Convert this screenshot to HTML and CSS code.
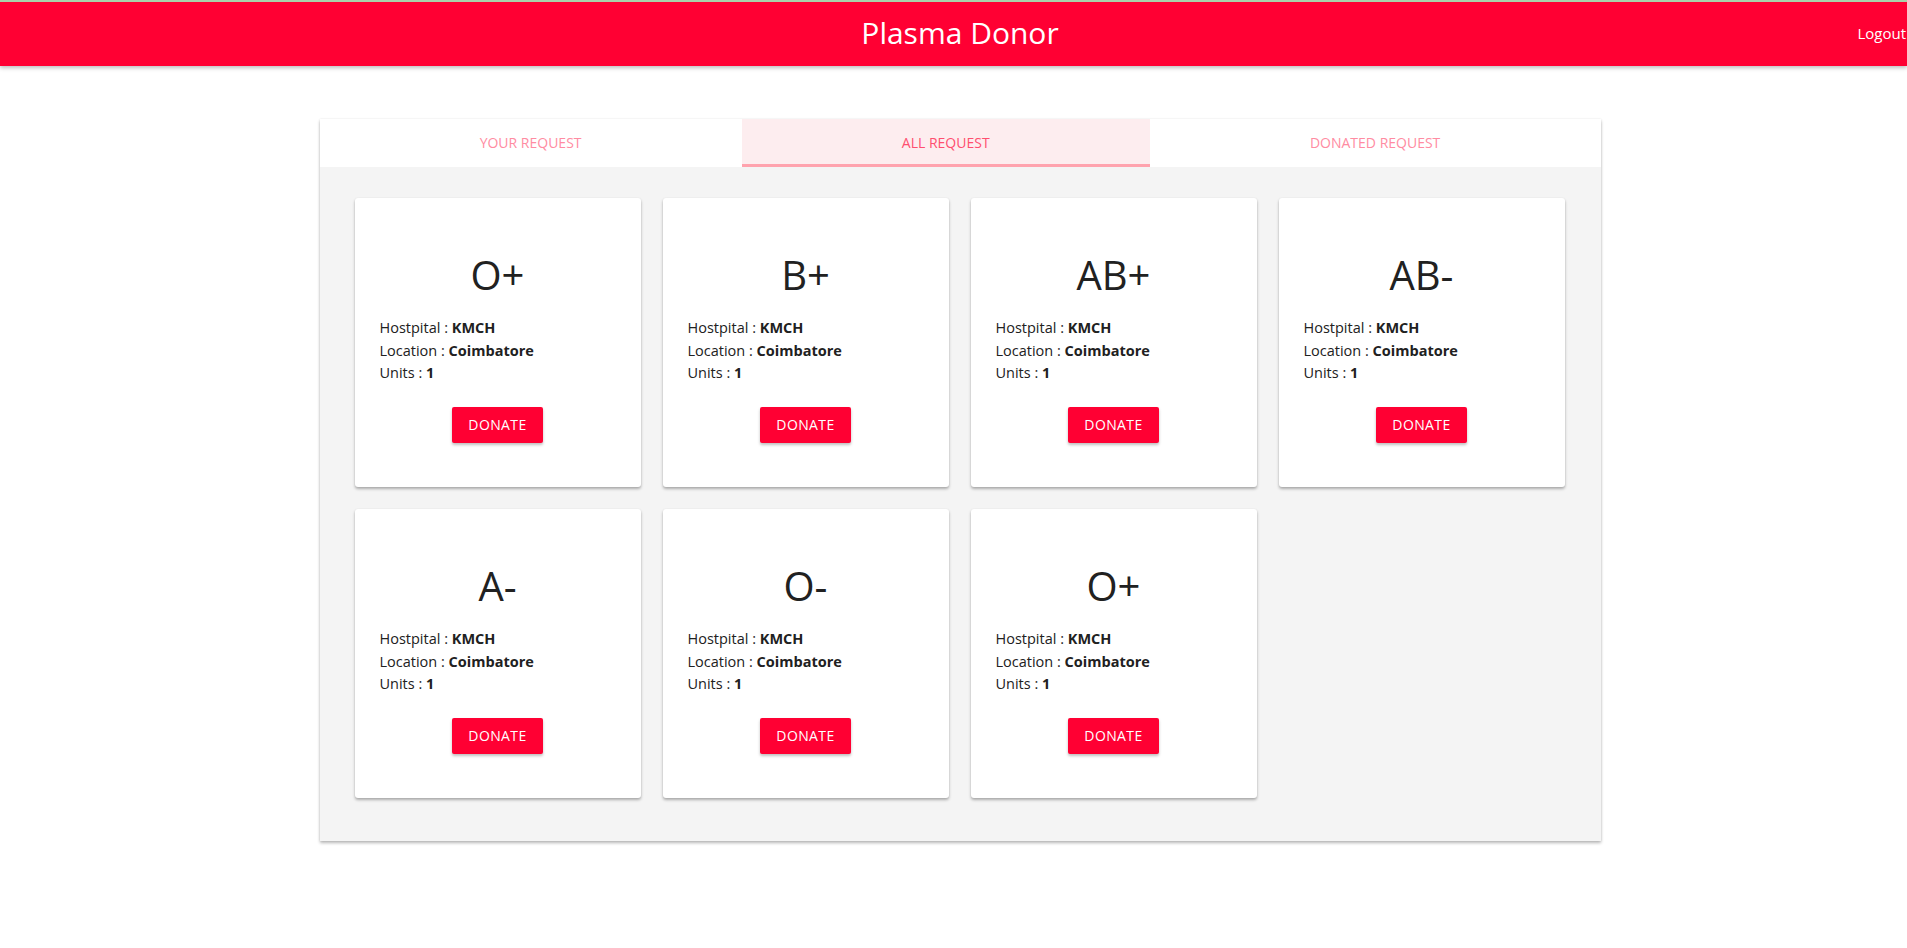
FILE: index.html
```html
<!DOCTYPE html>
<html lang="en">
<head>
<meta charset="utf-8">
<title>Plasma Donor</title>
<link rel="stylesheet" href="styles.css">
</head>
<body>
<header class="topbar">
  <span class="spacer"></span>
  <h1 class="brand">Plasma Donor</h1>
  <a class="logout" href="#">Logout</a>
</header>
<main class="page">
  <section class="panel">
    <nav class="tabs">
      <a class="tab" href="#">YOUR REQUEST</a>
      <a class="tab active" href="#">ALL REQUEST</a>
      <a class="tab" href="#">DONATED REQUEST</a>
    </nav>
    <div class="grid">
      <div class="card">
        <div class="group">O+</div>
        <div class="info">
          <div>Hostpital : <b>KMCH</b></div>
          <div>Location : <b>Coimbatore</b></div>
          <div>Units : <b>1</b></div>
        </div>
        <button class="donate">DONATE</button>
      </div>
      <div class="card">
        <div class="group">B+</div>
        <div class="info">
          <div>Hostpital : <b>KMCH</b></div>
          <div>Location : <b>Coimbatore</b></div>
          <div>Units : <b>1</b></div>
        </div>
        <button class="donate">DONATE</button>
      </div>
      <div class="card">
        <div class="group">AB+</div>
        <div class="info">
          <div>Hostpital : <b>KMCH</b></div>
          <div>Location : <b>Coimbatore</b></div>
          <div>Units : <b>1</b></div>
        </div>
        <button class="donate">DONATE</button>
      </div>
      <div class="card">
        <div class="group">AB-</div>
        <div class="info">
          <div>Hostpital : <b>KMCH</b></div>
          <div>Location : <b>Coimbatore</b></div>
          <div>Units : <b>1</b></div>
        </div>
        <button class="donate">DONATE</button>
      </div>
      <div class="card">
        <div class="group">A-</div>
        <div class="info">
          <div>Hostpital : <b>KMCH</b></div>
          <div>Location : <b>Coimbatore</b></div>
          <div>Units : <b>1</b></div>
        </div>
        <button class="donate">DONATE</button>
      </div>
      <div class="card">
        <div class="group">O-</div>
        <div class="info">
          <div>Hostpital : <b>KMCH</b></div>
          <div>Location : <b>Coimbatore</b></div>
          <div>Units : <b>1</b></div>
        </div>
        <button class="donate">DONATE</button>
      </div>
      <div class="card">
        <div class="group">O+</div>
        <div class="info">
          <div>Hostpital : <b>KMCH</b></div>
          <div>Location : <b>Coimbatore</b></div>
          <div>Units : <b>1</b></div>
        </div>
        <button class="donate">DONATE</button>
      </div>
    </div>
  </section>
</main>
</body>
</html>
```
FILE: styles.css
```css
* { box-sizing: border-box; }

html, body {
  margin: 0;
  padding: 0;
  background: #ffffff;
  font-family: "Open Sans", "Noto Sans", sans-serif;
  color: #212121;
}

.topbar {
  display: grid;
  grid-template-columns: 1fr auto 1fr;
  align-items: center;
  height: 66px;
  padding-left: 13px;
  background: #ff0033;
  border-top: 2px solid #a9d3ab;
  box-shadow: 0 2px 4px rgba(0, 0, 0, 0.25);
}

.brand {
  margin: 0 0 3px 0;
  font-size: 30px;
  font-weight: 400;
  color: #ffffff;
  line-height: 61px;
}

.logout {
  justify-self: end;
  padding-right: 1px;
  padding-bottom: 3px;
  font-size: 15px;
  color: #ffffff;
  text-decoration: none;
}

.page {
  padding: 53px 0 60px 13px;
}

.panel {
  width: 1281px;
  margin: 0 auto;
  background: #f4f4f4;
  box-shadow: 0 2px 3px rgba(0, 0, 0, 0.28), 0 0 2px rgba(0, 0, 0, 0.08);
}

.tabs {
  display: flex;
  height: 48px;
  background: #ffffff;
}

.tab {
  flex: 1 1 auto;
  display: flex;
  align-items: center;
  justify-content: center;
  font-size: 14px;
  color: #ff8ca2;
  text-decoration: none;
  border-bottom: 3px solid transparent;
  padding-top: 1px;
}

.tab.active {
  background: #fdedef;
  color: #ff4f6f;
  border-bottom-color: #ffa3ae;
}

.grid {
  display: grid;
  grid-template-columns: repeat(4, 286px);
  gap: 22px;
  padding: 31px 36px 43px 35px;
}

.card {
  height: 289px;
  background: #ffffff;
  border-radius: 3px;
  box-shadow: 0 2px 3px rgba(0, 0, 0, 0.3), 0 0 2px rgba(0, 0, 0, 0.06);
  padding: 53px 25px 0 25px;
  display: flex;
  flex-direction: column;
  align-items: center;
}

.group {
  font-size: 40px;
  line-height: 48px;
  text-align: center;
  color: #212121;
}

.info {
  align-self: stretch;
  margin-top: 18px;
  font-size: 14.5px;
  line-height: 22.5px;
  color: #212121;
}

.info b {
  font-weight: 700;
}

.donate {
  margin-top: 22px;
  height: 36px;
  padding: 0 16px;
  border: none;
  border-radius: 2px;
  background: #ff0033;
  color: #ffffff;
  font-family: "Open Sans", "Noto Sans", sans-serif;
  font-size: 14px;
  letter-spacing: 0.4px;
  box-shadow: 0 2px 3px rgba(0, 0, 0, 0.25);
}
```
